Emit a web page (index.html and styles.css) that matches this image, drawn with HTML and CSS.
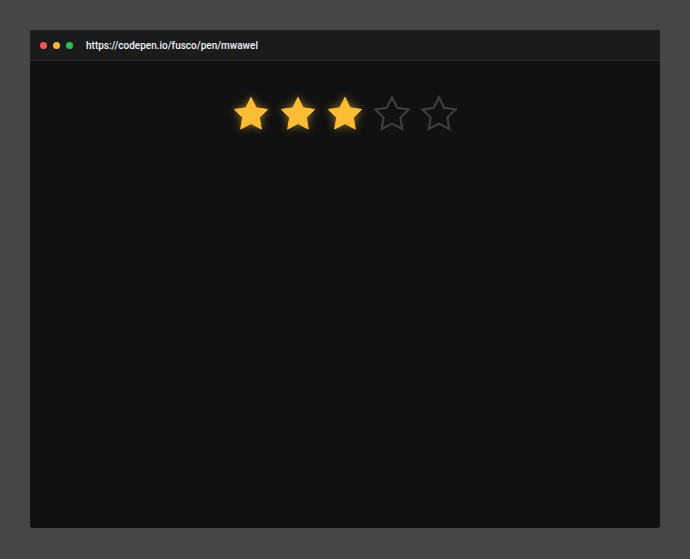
FILE: index.html
```html
<!DOCTYPE html>
<html>
<head>
<meta charset="utf-8">
<link rel="stylesheet" href="styles.css">
</head>
<body>
<div class="window">
  <div class="titlebar">
    <span class="dot red"></span>
    <span class="dot yellow"></span>
    <span class="dot green"></span>
    <span class="url">https://codepen.io/fusco/pen/mwawel</span>
  </div>
  <div class="content">
    <div class="stars">
      <svg class="star on" viewBox="0 0 24 24"><polygon points="12,2 15.09,8.26 22,9.27 17,14.14 18.18,21.02 12,17.77 5.82,21.02 7,14.14 2,9.27 8.91,8.26"/></svg>
      <svg class="star on" viewBox="0 0 24 24"><polygon points="12,2 15.09,8.26 22,9.27 17,14.14 18.18,21.02 12,17.77 5.82,21.02 7,14.14 2,9.27 8.91,8.26"/></svg>
      <svg class="star on" viewBox="0 0 24 24"><polygon points="12,2 15.09,8.26 22,9.27 17,14.14 18.18,21.02 12,17.77 5.82,21.02 7,14.14 2,9.27 8.91,8.26"/></svg>
      <svg class="star off" viewBox="0 0 24 24"><polygon points="12,2 15.09,8.26 22,9.27 17,14.14 18.18,21.02 12,17.77 5.82,21.02 7,14.14 2,9.27 8.91,8.26"/></svg>
      <svg class="star off" viewBox="0 0 24 24"><polygon points="12,2 15.09,8.26 22,9.27 17,14.14 18.18,21.02 12,17.77 5.82,21.02 7,14.14 2,9.27 8.91,8.26"/></svg>
    </div>
  </div>
</div>
</body>
</html>
```
FILE: styles.css
```css
html, body {
  margin: 0;
  padding: 0;
  background: #464646;
}
body {
  padding: 30px 0 0 30px;
  font-family: Roboto, "Liberation Sans", sans-serif;
}
.window {
  width: 630px;
  height: 498px;
  background: #111111;
  border-radius: 3px;
  overflow: hidden;
  display: flex;
  flex-direction: column;
}
.titlebar {
  height: 30px;
  background: #1b1b1b;
  border-bottom: 1px solid #2c2c2c;
  display: flex;
  align-items: center;
  padding-left: 10px;
  flex-shrink: 0;
}
.dot {
  width: 7px;
  height: 7px;
  border-radius: 50%;
  margin-right: 6px;
}
.red { background: #f25656; }
.yellow { background: #f6b73c; }
.green { background: #2bc24d; }
.url {
  margin-left: 7px;
  color: #eef3f7;
  font-size: 10px;
  font-weight: 500;
  letter-spacing: 0;
}
.content {
  flex: 1;
  padding-top: 33px;
}
.stars {
  display: flex;
  justify-content: center;
  gap: 7px;
}
.star {
  width: 40px;
  height: 40px;
  display: block;
}
.star.on polygon {
  fill: #fbbd35;
  stroke: #fbbd35;
  stroke-width: 0.6;
  stroke-linejoin: round;
}
.star.on {
  filter: drop-shadow(0 0 4px rgba(251, 189, 53, 0.55));
}
.star.off polygon {
  fill: none;
  stroke: #3e3e3e;
  stroke-width: 1.3;
  stroke-linejoin: miter;
}
```
